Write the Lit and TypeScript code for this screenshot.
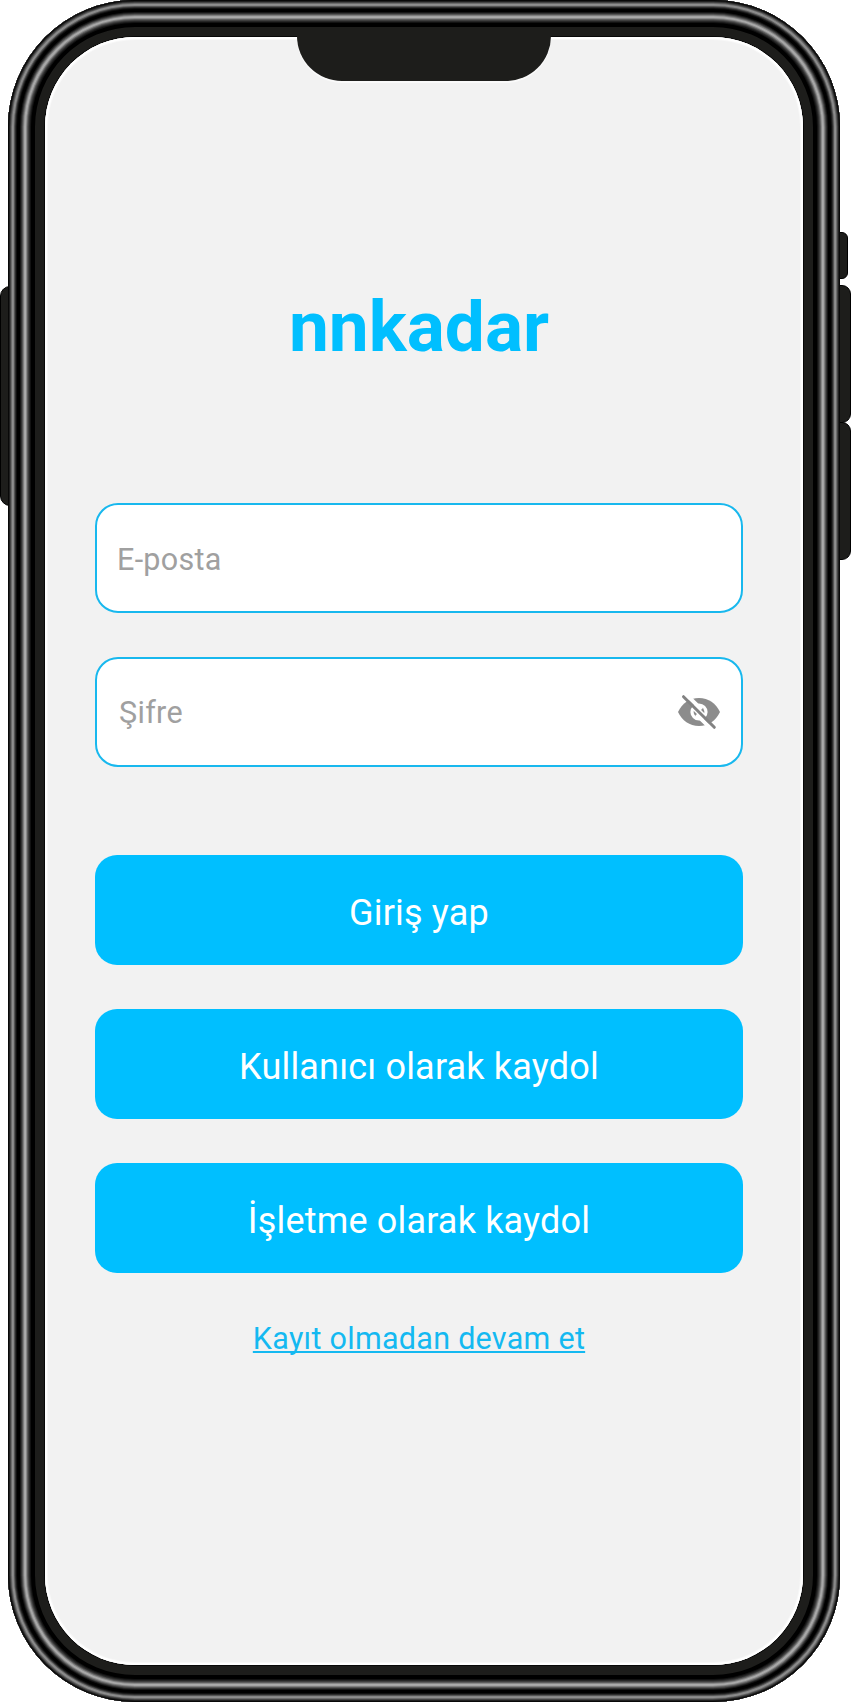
import { LitElement, html, css } from "lit";
import { customElement } from "lit/decorators.js";

@customElement("eye-off-icon")
class EyeOffIcon extends LitElement {
  static styles = css`
    :host { display: block; width: 44px; height: 36px; }
    svg { display: block; }
    .fill { fill: #8c8c8c; }
    .white { fill: #fff; }
    .gap { fill: none; stroke: #fff; stroke-width: 4; }
    .center { fill: none; stroke: #fff; stroke-width: 6; }
    .slash { stroke: #828282; stroke-width: 3; stroke-linecap: round; }
  `;
  render() {
    return html`<svg width="44" height="36" viewBox="0 0 44 36">
      <path class="fill" d="M1 18C5 9.500 12.500 4 22 4s17 5.500 21 14c-4 8.500-11.500 14-21 14S5 26.500 1 18z" />
      <circle class="white" cx="22" cy="18" r="8.600" />
      <circle class="fill" cx="22" cy="18" r="5.400" />
      <path class="gap" d="M8 -.5 24.500 15.500M36 36.500 19.500 20.500" />
      <path class="center" d="M17 13 27 23" />
      <path class="slash" d="M6.500 2.700 37.300 33.300" />
    </svg>`;
  }
}

@customElement("app-root")
class AppRoot extends LitElement {
  static styles = css`
    :host { display: block; width: 851px; height: 1702px; background: #fff; font-family: Roboto, sans-serif; }
    * { box-sizing: border-box; }
    .device { position: relative; width: 851px; height: 1702px; padding: 0 11px 0 8px; overflow: hidden; }
    .key { position: absolute; background: #1d1d1b; border: 1px solid #000; }
    .mute { left: 0; top: 286px; width: 20px; height: 220px; border-radius: 10px; }
    .side { left: 830px; top: 232px; width: 18px; height: 47px; border-radius: 6px; }
    .up { left: 830px; top: 285px; width: 21px; height: 138px; border-radius: 9px; }
    .down { left: 830px; top: 422px; width: 21px; height: 138px; border-radius: 9px; }
    .frame {
      position: relative; width: 832px; height: 1702px; padding: 37px; border-radius: 127px; background: #1d1d1b;
      box-shadow:
        inset 0 0 0 1px #080808, inset 0 0 0 2px #202020, inset 0 0 0 3px #444,
        inset 0 0 0 4px #6c6c6c, inset 0 0 0 5px #8e8e8e, inset 0 0 0 6px #868686,
        inset 0 0 0 7px #555, inset 0 0 0 8px #2d2d2d, inset 0 0 0 9px #101010,
        inset 0 0 0 12px #000, inset 0 0 0 13px #161616, inset 0 0 0 14px #333,
        inset 0 0 0 15px #555, inset 0 0 0 16px #7e7e7e, inset 0 0 0 17px #a4a4a4,
        inset 0 0 0 18px #aaa, inset 0 0 0 19px #888, inset 0 0 0 20px #5c5c5c,
        inset 0 0 0 21px #3e3e3e, inset 0 0 0 22px #262626, inset 0 0 0 23px #121212,
        inset 0 0 0 27px #000;
    }
    .screen {
      position: relative; display: flex; flex-direction: column; width: 758px; height: 1628px; padding: 248px 60px 0 50px;
      border-radius: 90px; background: #f2f2f2;
      box-shadow: 0 0 0 1px #080808, inset 0 0 0 2px #fff, inset 0 0 0 3px #f8f8f8;
    }
    .notch { position: absolute; left: 252px; top: -1px; width: 254px; height: 45px; border-radius: 0 0 45px 45px; background: #1d1d1b; box-shadow: 0 2px 0 #fafafa; }
    h1 { margin: 0 0 134px; height: 84px; line-height: 84px; text-align: center; font-size: 71.200px; font-weight: 700; color: #00bfff; }
    .fields, .actions { display: flex; flex-direction: column; gap: 44px; }
    .actions { margin-top: 88px; }
    .field { display: flex; align-items: center; height: 110px; padding: 0 20px; border: 2px solid #18b8ee; border-radius: 23px; background: #fff; }
    .email { padding-top: 2px; }
    .password { padding-left: 22px; }
    input { flex: 1; min-width: 0; height: 60px; padding: 1px 0 0; border: 0; outline: 0; background: none; font: 400 30.500px Roboto, sans-serif; letter-spacing: .3px; }
    input::placeholder { color: #a0a0a0; opacity: 1; }
    button { height: 110px; padding: 5px 0 0; border: 0; border-radius: 22px; background: #00bfff; color: #fff; font: 400 36px Roboto, sans-serif; letter-spacing: .18px; }
    a {
      align-self: center; margin-top: 48px; font-size: 30.500px; line-height: 36px; letter-spacing: .28px; color: #14b9f1;
      text-decoration: underline; text-decoration-thickness: 2px; text-underline-offset: 2px; text-decoration-skip-ink: none;
    }
  `;
  render() {
    return html`<main class="device">
      <span class="key mute"></span><span class="key side"></span><span class="key up"></span><span class="key down"></span>
      <div class="frame">
        <section class="screen">
          <span class="notch"></span>
          <h1>nnkadar</h1>
          <div class="fields">
            <label class="field email"><input type="email" placeholder="E-posta" /></label>
            <label class="field password"><input type="password" placeholder="Şifre" /><eye-off-icon></eye-off-icon></label>
          </div>
          <div class="actions">
            ${["Giriş yap", "Kullanıcı olarak kaydol", "İşletme olarak kaydol"].map((t) => html`<button>${t}</button>`)}
          </div>
          <a>Kayıt olmadan devam et</a>
        </section>
      </div>
    </main>`;
  }
}
